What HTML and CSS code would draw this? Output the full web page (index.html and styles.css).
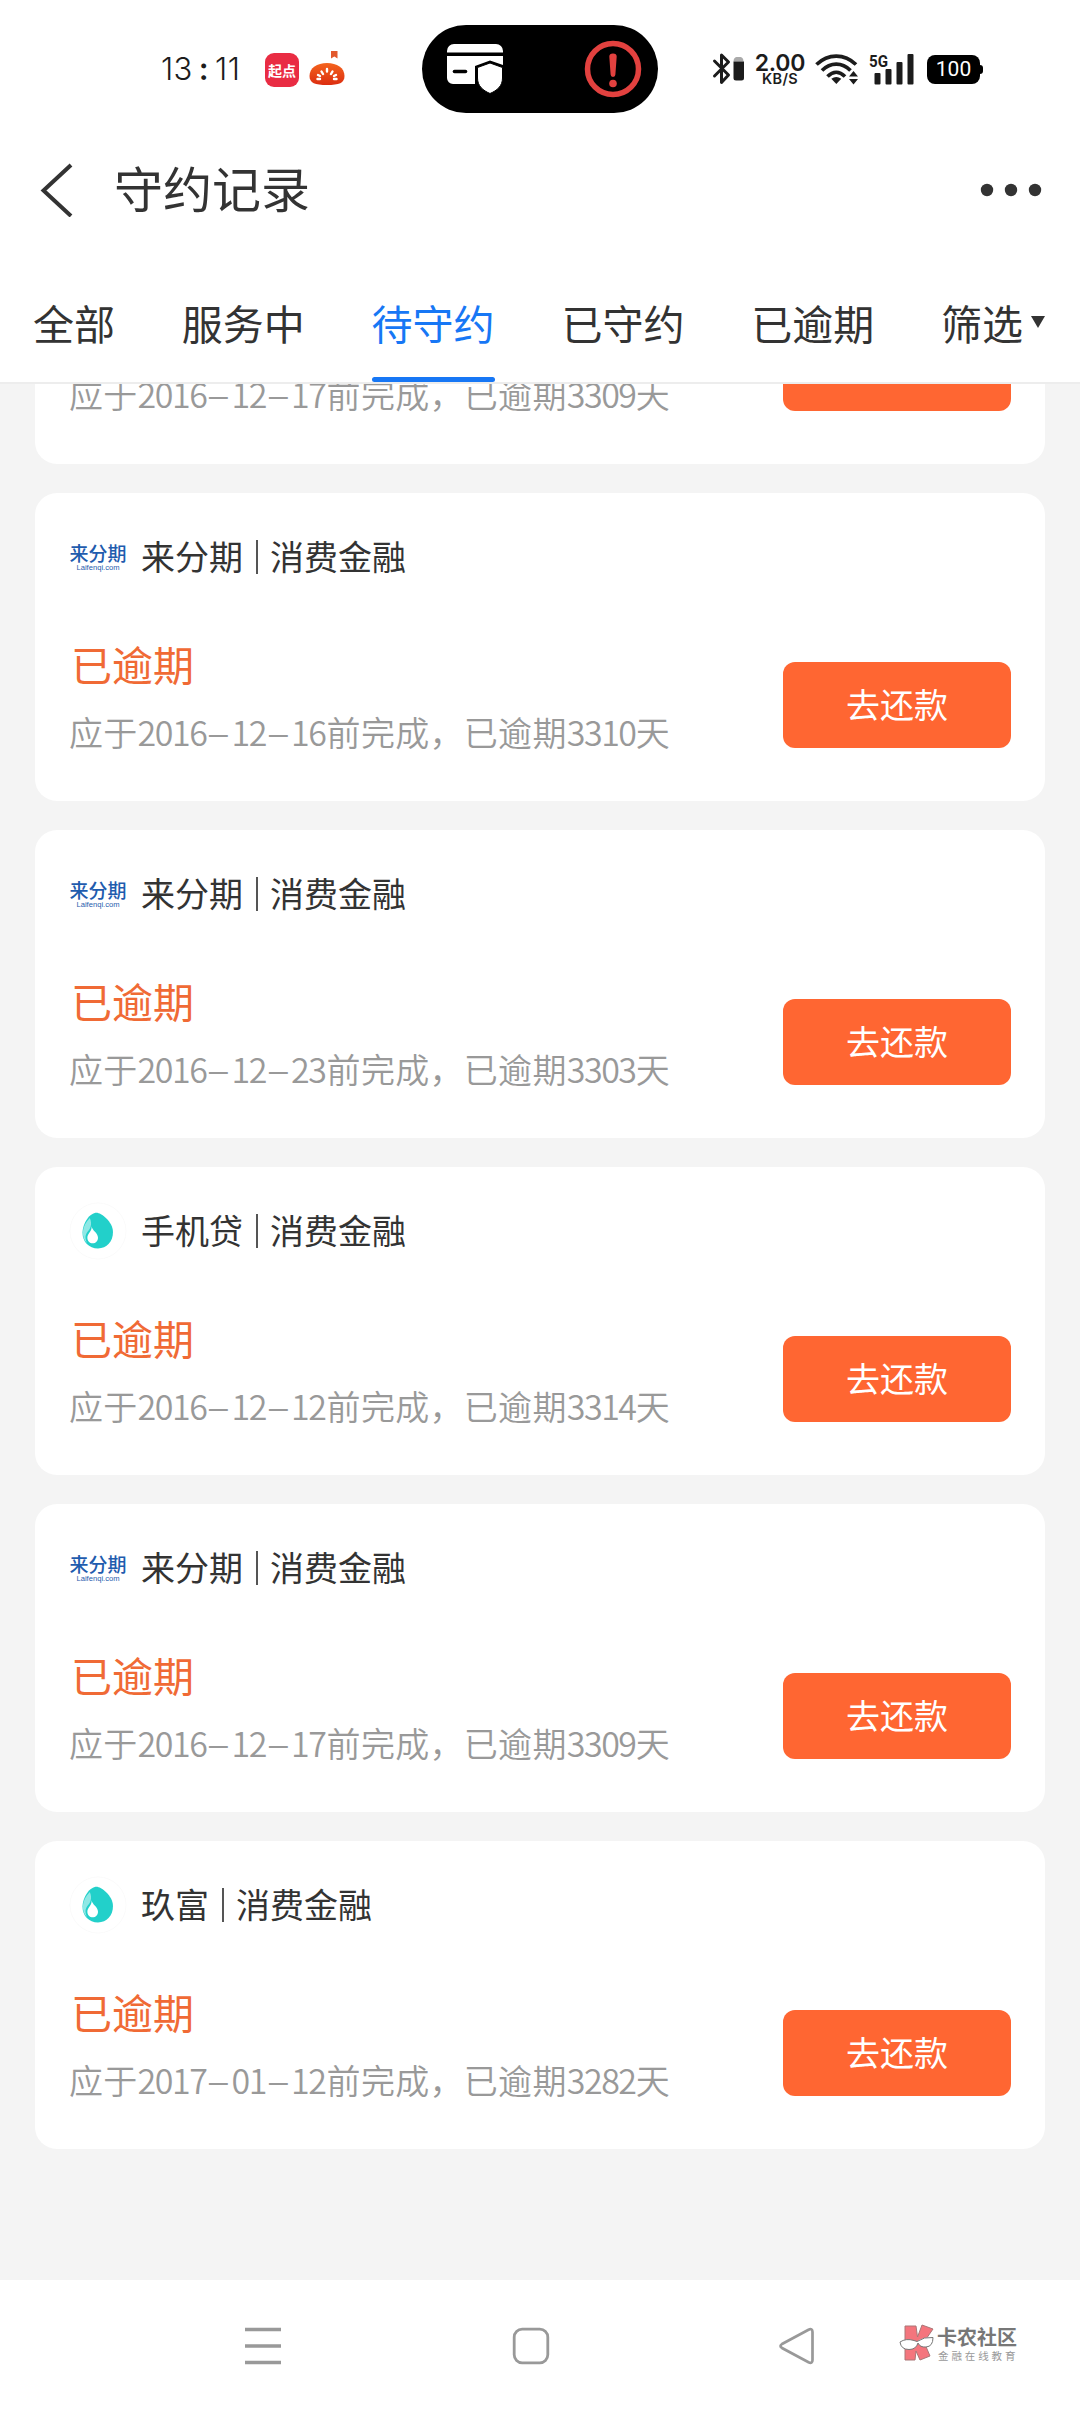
FILE: index.html
```html
<!DOCTYPE html>
<html lang="zh-CN">
<head>
<meta charset="utf-8">
<title>守约记录</title>
<link rel="stylesheet" href="styles.css">
</head>
<body>
<svg class="defs" width="0" height="0">
  <defs>
    <symbol id="drop" viewBox="0 0 60 60">
      <circle cx="30" cy="30" r="29" fill="#fff" stroke="#fafafa"/>
      <path d="M28.500 11C33 11 45.500 20 45.500 31C45.500 41 39 48 30 48C20.500 48 14 41 14 32C14 21 22 11 28.500 11Z" fill="#22d0ca"/>
      <path d="M21.500 16.500C24.500 23 22 28 19 31C16 35 17 39 19 43C12 36 13 25 21.500 16.500Z" fill="#8fe8e5"/>
      <path d="M23.500 25C24 30 30 31.500 30 37C30 40.500 27.500 42.800 24.500 42.800C21.500 42.800 19 40.500 19 37C19 32.500 23.500 31 23.500 25Z" fill="#fff"/>
    </symbol>
  </defs>
</svg>
<div class="screen">
  <header class="top">
    <div class="status">
      <span class="clock">13<i>:</i>11</span>
      <span class="app-badge">起点</span>
      <svg class="tomato" width="36" height="36" viewBox="0 0 36 36">
        <defs><linearGradient id="tom" x2="0" y2="1"><stop offset="0" stop-color="#f4641e"/><stop offset="1" stop-color="#dc2d10"/></linearGradient></defs>
        <path d="M22 1h6.500v7.500l-3.200-2-3.300 2z" fill="#e2582c"/>
        <path d="M18 13C28 13 35.500 18 35.500 26C35.500 33 30 35 18 35C6 35 .5 33 .5 26C.5 18 8 13 18 13Z" fill="url(#tom)"/>
        <g stroke="#fff" stroke-width="2.400" stroke-linecap="round"><path d="M18 19v2.500M12.500 21.500l1.500 2.500M23.500 21.500l-1.500 2.500M8.500 29h2.500M27.500 29h-2.500M9 25l2 1M27 25l-2 1"/></g>
      </svg>
      <div class="island">
        <svg width="58" height="52" viewBox="0 0 58 52">
          <path d="M1 8a7 7 0 0 1 7-7h42a7 7 0 0 1 7 7v1.500H1zM1 13h56v9l-13-4.500L29 23v18H7a6 6 0 0 1-6-6z" fill="#fff"/>
          <path d="M8.500 28.500h11" stroke="#000" stroke-width="3.600" stroke-linecap="round"/>
          <path d="M44 20l12.500 4.500V35c0 8-5.500 12.500-12.500 15.500C37 47.500 31.500 43 31.500 35V24.500z" fill="#fff" stroke="#000" stroke-width="1"/>
        </svg>
        <svg width="58" height="58" viewBox="0 0 58 58">
          <circle cx="29" cy="29" r="25.500" fill="none" stroke="#e2413f" stroke-width="5.500"/>
          <path d="M25.300 16.500a3.700 3 0 0 1 7.400 0l-1.300 18a2.400 2.400 0 0 1-4.800 0z" fill="#e2413f"/>
          <circle cx="29" cy="43.500" r="3.800" fill="#e2413f"/>
        </svg>
      </div>
      <svg class="bt" width="33" height="34" viewBox="0 0 33 34">
        <path d="M2.500 9L16.500 23L9.500 30.500V3L16.500 10L2.500 24" fill="none" stroke="#1c1c1c" stroke-width="3" stroke-linejoin="round" stroke-linecap="round"/>
        <path d="M21.500 9.500q0-4 3-4.500h4q3 .5 3 4.500z" fill="#aaa"/><path d="M21.500 9.500h10.500V26a2.500 2.500 0 0 1-2.500 2.500H24a2.500 2.500 0 0 1-2.500-2.500z" fill="#1c1c1c"/>
      </svg>
      <span class="speed"><b>2.00</b><small>KB/S</small></span>
      <svg class="wifi" width="44" height="34" viewBox="0 0 44 34">
        <g fill="none" stroke="#1c1c1c" stroke-width="3.700"><path d="M1.500 12.500C13 1.200 29.500 1.200 41 12.500M7 18.500C15.500 10 27 10 35.500 18.500M12.500 24.500C18 19 24.500 19 30 24.500"/></g>
        <path d="M21.300 32l-5-5.200q5-3.800 10 0z" fill="#1c1c1c"/>
        <path d="M38.500 19l4.500 5.500h-9zM38.500 32.500L34 27h9z" fill="#1c1c1c"/>
      </svg>
      <svg class="signal" width="46" height="34" viewBox="0 0 46 34">
        <text x="0" y="15" class="gen" textLength="19" lengthAdjust="spacingAndGlyphs">5G</text>
        <g fill="#1c1c1c"><rect x="5.500" y="21" width="6" height="11.500" rx="1"/><rect x="16.500" y="17" width="6" height="15.500" rx="1"/><rect x="27.500" y="10" width="6" height="22.500" rx="1"/><rect x="38.500" y="2" width="6" height="30.500" rx="1"/></g>
      </svg>
      <span class="battery">100</span>
    </div>
    <div class="titlebar">
      <svg width="34" height="54" viewBox="0 0 34 54"><path d="M31 2L3.500 27.500L31 53" fill="none" stroke="#333" stroke-width="4"/></svg>
      <h1>守约记录</h1>
      <svg class="more" width="62" height="14" viewBox="0 0 62 14" fill="#333"><circle cx="7" cy="7" r="6.200"/><circle cx="31" cy="7" r="6.200"/><circle cx="55" cy="7" r="6.200"/></svg>
    </div>
    <nav class="tabs">
      <span>全部</span><span>服务中</span><span class="active">待守约</span><span>已守约</span><span>已逾期</span><span class="filter">筛选<svg width="14" height="12" viewBox="0 0 14 12"><path d="M0 0h14L7 12z" fill="#333"/></svg></span>
    </nav>
  </header>

  <main class="list">
    <article class="card partial">
      <div class="body"><div class="info"><p class="due">应于<span class="num date">2016<i>–</i>12<i>–</i>17</span>前完成，已逾期<span class="num">3309</span>天</p></div><button aria-label="去还款"></button></div>
    </article>
    <article class="card">
      <div class="org"><span class="logo"><b>来分期</b><small>Laifenqi.com</small></span><span>来分期</span><i class="sep"></i><span>消费金融</span></div>
      <div class="body"><div class="info"><p class="state">已逾期</p><p class="due">应于<span class="num date">2016<i>–</i>12<i>–</i>16</span>前完成，已逾期<span class="num">3310</span>天</p></div><button>去还款</button></div>
    </article>
    <article class="card">
      <div class="org"><span class="logo"><b>来分期</b><small>Laifenqi.com</small></span><span>来分期</span><i class="sep"></i><span>消费金融</span></div>
      <div class="body"><div class="info"><p class="state">已逾期</p><p class="due">应于<span class="num date">2016<i>–</i>12<i>–</i>23</span>前完成，已逾期<span class="num">3303</span>天</p></div><button>去还款</button></div>
    </article>
    <article class="card">
      <div class="org"><svg class="logo"><use href="#drop"/></svg><span>手机贷</span><i class="sep"></i><span>消费金融</span></div>
      <div class="body"><div class="info"><p class="state">已逾期</p><p class="due">应于<span class="num date">2016<i>–</i>12<i>–</i>12</span>前完成，已逾期<span class="num">3314</span>天</p></div><button>去还款</button></div>
    </article>
    <article class="card">
      <div class="org"><span class="logo"><b>来分期</b><small>Laifenqi.com</small></span><span>来分期</span><i class="sep"></i><span>消费金融</span></div>
      <div class="body"><div class="info"><p class="state">已逾期</p><p class="due">应于<span class="num date">2016<i>–</i>12<i>–</i>17</span>前完成，已逾期<span class="num">3309</span>天</p></div><button>去还款</button></div>
    </article>
    <article class="card">
      <div class="org"><svg class="logo"><use href="#drop"/></svg><span>玖富</span><i class="sep"></i><span>消费金融</span></div>
      <div class="body"><div class="info"><p class="state">已逾期</p><p class="due">应于<span class="num date">2017<i>–</i>01<i>–</i>12</span>前完成，已逾期<span class="num">3282</span>天</p></div><button>去还款</button></div>
    </article>
  </main>

  <footer class="sysnav">
    <svg class="recent" width="36" height="38" viewBox="0 0 36 38" stroke="#999" stroke-width="3.400"><path d="M0 2.500h36M0 19h36M0 35.500h36"/></svg>
    <svg class="home" width="38" height="38" viewBox="0 0 38 38"><rect x="2.200" y="2.200" width="33.600" height="33.600" rx="8" fill="none" stroke="#999" stroke-width="2.800"/></svg>
    <svg class="back" width="36" height="38" viewBox="0 0 36 38"><path d="M3 17L29.500 2.700Q33.500 1 33.500 5V33Q33.500 37 29.500 35.300L3 21Q0 19 3 17Z" fill="none" stroke="#999" stroke-width="2.700"/></svg>
    <div class="brand">
      <svg width="36" height="38" viewBox="0 0 36 38">
        <path d="M6 2h11l1.500 11L23 1l11 4-9 13 6 14-10 4-4-9-1 9H6z" fill="#f4757d" stroke="#a77" stroke-width="1"/>
        <path d="M1 18q6-4 14-1.500l3 1q7-5 16-4q0 9-7 9.500q-6 .5-8-4q-2 6.500-9 6.500Q2 25.500 1 18z" fill="#fff" stroke="#777" stroke-width="1"/>
      </svg>
      <div><b>卡农社区</b><small>金融在线教育</small></div>
    </div>
  </footer>
</div>
</body>
</html>
```
FILE: styles.css
```css
* { box-sizing: border-box; margin: 0; padding: 0; }
body {
  width: 1080px;
  font-family: "Noto Sans CJK SC", sans-serif;
  font-weight: 400;
  color: #333;
  background: #fff;
}
i { font-style: normal; }
svg { display: block; flex: none; }
.defs { position: absolute; }
.screen { height: 2412px; display: flex; flex-direction: column; overflow: hidden; }

.top { height: 384px; flex: none; border-bottom: 2px solid #ededed; background: #fff; display: flex; flex-direction: column; }

.status { height: 138px; display: flex; align-items: center; padding-left: 161px; color: #1c1c1c; white-space: nowrap; }
.clock { width: 104px; font: 300 31px/40px Inter, sans-serif; letter-spacing: 0.4px; display: flex; }
.clock i { padding: 0 6px; font-weight: 600; }
.app-badge { width: 34px; height: 34px; margin-top: 2px; border-radius: 9px; background: #e92c43; color: #fff; font-size: 14px; font-weight: 700; line-height: 34px; text-align: center; }
.tomato { margin: 0 0 2px 10px; }
.island { width: 236px; height: 88px; margin-left: 77px; border-radius: 44px; background: #000; display: flex; align-items: center; justify-content: space-between; padding: 0 16px 0 24px; }
.bt { margin-left: 54px; }
.speed { width: 52px; margin-left: 9px; display: flex; flex-direction: column; align-items: center; font-family: Inter, sans-serif; }
.speed b { font-size: 23px; line-height: 22px; font-weight: 600; letter-spacing: -0.2px; }
.speed small { font-size: 14.5px; line-height: 16px; font-weight: 600; margin-top: -3px; letter-spacing: 0.3px; }
.wifi { margin-left: 9px; }
.signal { margin-left: 10px; }
.gen { font: 700 17px Roboto, sans-serif; fill: #1c1c1c; }
.battery { position: relative; width: 53px; height: 29px; margin-left: 12px; border-radius: 8px; background: #000; color: #fff; font: 400 21px/29px Roboto, sans-serif; text-align: center; }
.battery::after { content: ""; position: absolute; right: -3px; top: 10px; width: 4px; height: 9px; border-radius: 0 3px 3px 0; background: #000; }

.titlebar { height: 104px; display: flex; align-items: center; padding: 0 38px 0 40px; }
.titlebar h1 { margin: -7px 0 0 40px; font-size: 49px; line-height: 74px; font-weight: 400; }
.titlebar .more { margin-left: auto; }

.tabs { height: 140px; display: flex; justify-content: space-between; padding: 49px 35px 0 33px; font-size: 41px; line-height: 62px; }
.tabs .active { color: #1777f5; position: relative; }
.tabs .active::after { content: ""; position: absolute; left: 0; bottom: 0; width: 100%; height: 5px; border-radius: 3px; background: #1777f5; }
.filter { height: 62px; display: flex; align-items: center; gap: 8px; }

.list { flex: 1; min-height: 0; overflow: hidden; background: #f4f4f4; display: flex; flex-direction: column; justify-content: flex-end; gap: 29px; padding: 0 35px 131px; }
.card { flex: none; height: 308px; border-radius: 22px; background: #fff; padding: 35px 34px 0 35px; }
.org { height: 58px; display: flex; align-items: center; font-size: 34px; line-height: 52px; }
.org > span:not(.logo) { margin-top: -3px; }
.logo { width: 58px; height: 58px; margin-right: 14px; margin-left: -1px; border-radius: 50%; display: flex; flex-direction: column; align-items: center; justify-content: center; color: #1f5cae; white-space: nowrap; }
.logo b { font-size: 19px; line-height: 22px; font-weight: 500; }
.logo small { font: 400 7.6px/9px "Liberation Sans", sans-serif; margin-top: -1px; }
.sep { width: 2px; height: 34px; margin: 0 12px 0 13px; background: #555; }
.body { display: flex; justify-content: space-between; align-items: flex-start; }
.info { padding-top: 47px; }
.state { font-size: 41px; line-height: 60px; font-weight: 400; color: #f06a35; margin-left: 1px; }
.due { margin: 14px 0 0 -1px; font-size: 34px; line-height: 50px; letter-spacing: 0.3px; font-weight: 350; color: #999; white-space: nowrap; }
.num { display: inline-block; width: 69px; letter-spacing: -1.45px; }
.date { width: 189px; }
.num i { display: inline-block; width: 25px; text-align: center; letter-spacing: 0; transform: scaleX(1.25); }
.partial { height: 80px; padding-top: 0; border-radius: 0 0 22px 22px; }
.partial .info { padding-top: 0; }
.partial .due { margin-top: -15px; }
.partial button { height: 27px; margin-top: 0; border-radius: 0 0 12px 12px; }
button { width: 228px; height: 86px; margin-top: 76px; padding-bottom: 2px; border: 0; border-radius: 12px; background: #ff6632; color: #fff; font: 400 34px/84px "Noto Sans CJK SC", sans-serif; }

.sysnav { height: 132px; flex: none; display: flex; align-items: center; padding-left: 245px; background: #fff; }
.home { margin-left: 231px; }
.back { margin-left: 229px; }
.brand { margin: -6px 0 0 84px; display: flex; align-items: center; gap: 2px; color: #777; white-space: nowrap; }
.brand div { display: flex; flex-direction: column; }
.brand b { font-size: 20px; line-height: 24px; font-weight: 700; }
.brand small { font-size: 10.5px; line-height: 13px; letter-spacing: 2.9px; color: #999; margin-left: 1px; }
```
